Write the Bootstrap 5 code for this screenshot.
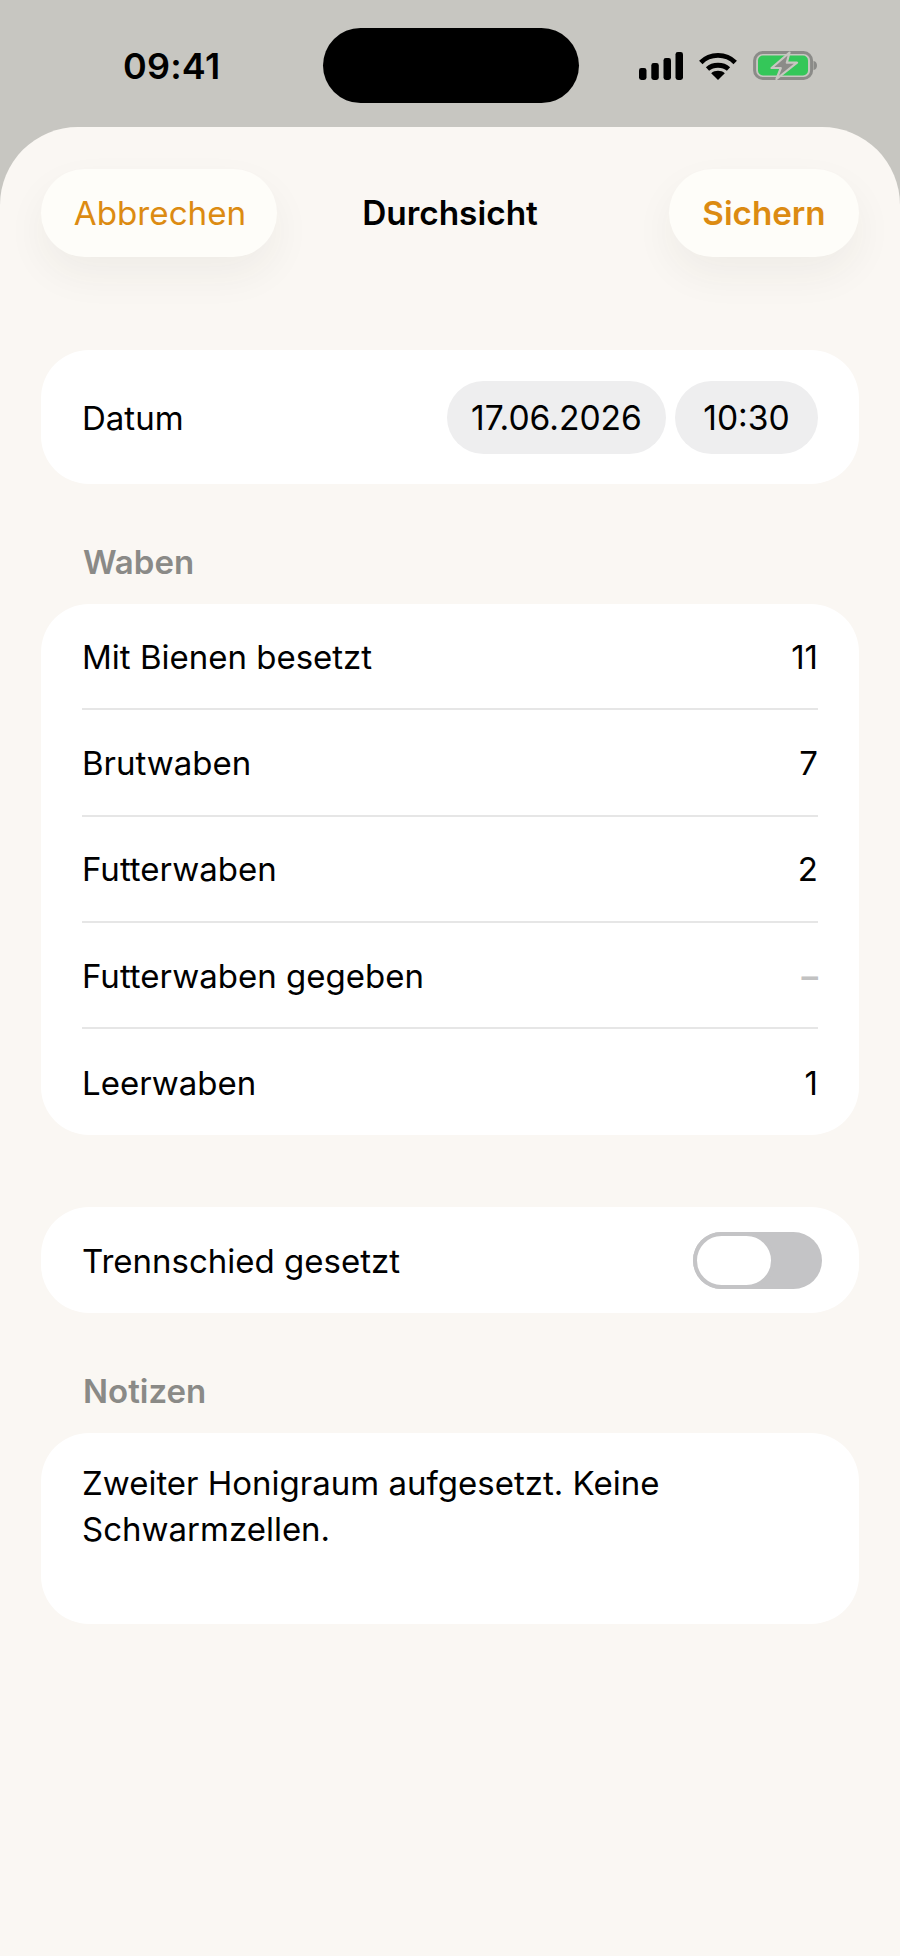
<!DOCTYPE html>
<html lang="de">
<head>
<meta charset="utf-8">
<title>Durchsicht</title>
<link href="https://cdn.jsdelivr.net/npm/bootstrap@5.3.0/dist/css/bootstrap.min.css" rel="stylesheet">
<style>
html,body{margin:0;height:1956px;background:#c7c6c1;font-family:Inter,"Liberation Sans",sans-serif;color:#000;overflow:hidden}
body{font-weight:380}
.statusbar{height:127px;padding:4px 83px 0 123px}
.clock{font-size:36px;font-weight:600;line-height:1;letter-spacing:.2px;padding-top:1px}
.island{width:256px;height:75px;background:#000;border-radius:38px;margin:0 0 0 103px}
.stat-icons{margin-left:auto;gap:16px}
.sheet{background:#faf7f3;height:1829px;border-radius:78px 78px 0 0;padding:42px 41px 0}
.navline{height:88px;position:relative}
.pillbtn{height:88px;border:0;border-radius:44px;background:#fefdf9;color:#dc8b12;font-size:33.2px;font-weight:380;box-shadow:0 18px 40px rgba(60,50,30,.055);line-height:1;padding:2px 0 0!important}
.pill-cancel{width:236px;padding-left:2px!important}
.pill-save{width:190px;font-weight:600}
.navtitle{font-size:33.4px;font-weight:600;line-height:1;padding-top:2px}
.panel{background:#fff;border-radius:48px;font-size:33px;line-height:1.2;padding:0 41px}
.panel-date{height:134px;margin-top:93px}
.chips{gap:9px;font-size:33.6px}
.chip{background:#eeeeef;border-radius:37px;height:73px;display:flex;align-items:center;justify-content:center;padding-top:2px}
.chip-date{width:219px}
.chip-time{width:143px}
.sect{font-size:33px;font-weight:600;color:#8a8a87;line-height:1;padding-left:42px;margin:62px 0 25px}
.rows{background:transparent;--bs-list-group-bg:transparent;border-radius:0}
.rows .list-group-item{height:106.3px;padding:0;border:0;border-bottom:2px solid #e6e6e6;display:flex;justify-content:space-between;align-items:center;font-size:33px;color:#000;background:transparent}
.rows .list-group-item:last-child{border-bottom:0}
.rows .list-group-item>span,.panel>span{padding-top:3px}
.dash{color:#c2c2c2;font-weight:600}
.panel-switch{height:106px;margin-top:72px;padding-right:37px}
.toggle{width:129px;height:57px;border-radius:29px;background:#c4c4c6;position:relative}
.toggle::before{content:"";position:absolute;left:0;top:0;width:82px;height:57px;border-radius:29px;background:#fff;border:4px solid #c4c4c6}
.panel-notes{height:191px;padding-top:27px;line-height:46px}
</style>
</head>
<body>
<div class="statusbar d-flex align-items-center">
  <div class="clock">09:41</div>
  <div class="island"></div>
  <div class="stat-icons d-flex align-items-center">
    <svg width="44" height="28" viewBox="0 0 44 28" fill="#000"><rect x="0" y="16" width="7.500" height="12" rx="2.400"/><rect x="12.300" y="11" width="7.500" height="17" rx="2.400"/><rect x="24.500" y="6" width="7.500" height="22" rx="2.400"/><rect x="36.500" y="0" width="7.500" height="28" rx="2.400"/></svg>
    <svg width="38" height="28" viewBox="0 0 38 28" fill="none" stroke="#000" stroke-width="4.800"><path d="M1.800 10.500C11 1 27 1 36.200 10.500"/><path d="M8.500 17C14 12 24 12 29.500 17"/><path d="M19 28l-6.800-6.800C16 18 22 18 25.800 21.200z" fill="#000" stroke="none"/></svg>
    <svg width="64" height="29" viewBox="0 0 64 29"><rect x="1.600" y="1.600" width="57" height="25.800" rx="8" fill="none" stroke="#8b8b88" stroke-width="3"/><rect x="5" y="4.500" width="50" height="20" rx="5" fill="#34c759"/><path d="M60.500 10c2.400.4 3.500 2.200 3.500 4.500s-1.100 4.100-3.500 4.500z" fill="#8b8b88"/><path d="M36.500 1.500L18.500 17h9.300l-4.300 11L44 11.700H33.800z" fill="#8b8b88" stroke="#c7c6c1" stroke-width="2.200" stroke-linejoin="round"/></svg>
  </div>
</div>
<main class="sheet">
  <div class="navline d-flex justify-content-between align-items-center">
    <button class="btn pillbtn pill-cancel" type="button">Abbrechen</button>
    <div class="navtitle position-absolute top-50 start-50 translate-middle">Durchsicht</div>
    <button class="btn pillbtn pill-save" type="button">Sichern</button>
  </div>
  <section class="panel panel-date d-flex justify-content-between align-items-center">
    <span>Datum</span>
    <div class="d-flex chips"><span class="chip chip-date">17.06.2026</span><span class="chip chip-time">10:30</span></div>
  </section>
  <h2 class="sect">Waben</h2>
  <section class="panel">
    <ul class="list-group rows">
      <li class="list-group-item"><span>Mit Bienen besetzt</span><span>11</span></li>
      <li class="list-group-item"><span>Brutwaben</span><span>7</span></li>
      <li class="list-group-item"><span>Futterwaben</span><span>2</span></li>
      <li class="list-group-item"><span>Futterwaben gegeben</span><span class="dash">–</span></li>
      <li class="list-group-item"><span>Leerwaben</span><span>1</span></li>
    </ul>
  </section>
  <section class="panel panel-switch d-flex justify-content-between align-items-center">
    <span>Trennschied gesetzt</span>
    <div class="toggle" role="switch" aria-checked="false"></div>
  </section>
  <h2 class="sect">Notizen</h2>
  <section class="panel panel-notes">Zweiter Honigraum aufgesetzt. Keine Schwarmzellen.</section>
</main>
<script src="https://cdn.jsdelivr.net/npm/bootstrap@5.3.0/dist/js/bootstrap.bundle.min.js"></script>
</body>
</html>
